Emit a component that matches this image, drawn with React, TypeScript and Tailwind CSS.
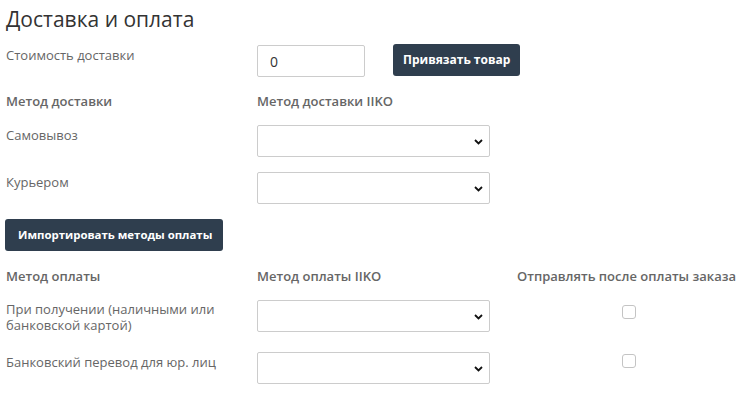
const font = { fontFamily: '"Open Sans", "Noto Sans", sans-serif' };

function Select() {
  return (
    <div className="relative w-[233px] h-[32px] border border-[#cccccc] bg-white rounded-[2px]">
      <svg
        className="absolute right-[6px] top-[13px]"
        width="9"
        height="6"
        viewBox="0 0 9 6"
        fill="none"
      >
        <polyline points="1,1 4.5,4.5 8,1" stroke="#111" strokeWidth="1.8" />
      </svg>
    </div>
  );
}

function Checkbox({ offset }: { offset: string }) {
  return (
    <div className={`flex-1 flex justify-center ${offset}`}>
      <span className="block w-[14px] h-[14px] border border-[#c4c4c4] rounded-[3px] bg-white" />
    </div>
  );
}

const btn =
  "h-[32px] bg-[#2f3e4e] text-white font-bold rounded-[3px] leading-none";

export default function App() {
  return (
    <div className="w-[740px] h-[394px] bg-white pl-[6px] pt-[8px] text-[13px] text-[#666]" style={font}>
      <h1 className="text-[21px] leading-[22px] text-[#333] font-normal mb-[15px]">
        Доставка и оплата
      </h1>

      {/* Стоимость доставки */}
      <div className="flex items-start">
        <div className="w-[251px] pt-[3px] leading-[15px]">Стоимость доставки</div>
        <div className="w-[108px] h-[32px] border border-[#cccccc] rounded-[2px] px-[12px] flex items-center text-[14px] text-[#333]">
          0
        </div>
        <button className={`${btn} text-[12px] ml-[28px] -mt-[1px] px-[10px]`}>Привязать товар</button>
      </div>

      {/* Методы доставки */}
      <div className="flex mt-[16px] font-semibold leading-[16px]">
        <div className="w-[251px]">Метод доставки</div>
        <div>Метод доставки IIKO</div>
      </div>

      <div className="flex items-start mt-[16px]">
        <div className="w-[251px] pt-[2px] leading-[16px]">Самовывоз</div>
        <Select />
      </div>
      <div className="flex items-start mt-[15px]">
        <div className="w-[251px] pt-[2px] leading-[16px]">Курьером</div>
        <Select />
      </div>

      <button className={`${btn} text-[11.4px] mt-[15px] -ml-[1px] pl-[13px] pr-[11px]`}>
        Импортировать методы оплаты
      </button>

      {/* Методы оплаты */}
      <div className="flex mt-[17px] font-semibold leading-[16px]">
        <div className="w-[251px]">Метод оплаты</div>
        <div className="w-[260px]">Метод оплаты IIKO</div>
        <div>Отправлять после оплаты заказа</div>
      </div>

      <div className="flex items-start mt-[16px]">
        <div className="w-[251px] pt-[1px] leading-[16px]">
          При получении (наличными или
          <br />
          банковской картой)
        </div>
        <Select />
        <div className="w-[27px]" />
        <Checkbox offset="mt-[5px]" />
      </div>
      <div className="flex items-start mt-[19px]">
        <div className="w-[251px] pt-[2px] leading-[16px]">Банковский перевод для юр. лиц</div>
        <Select />
        <div className="w-[27px]" />
        <Checkbox offset="mt-[2px]" />
      </div>
    </div>
  );
}
